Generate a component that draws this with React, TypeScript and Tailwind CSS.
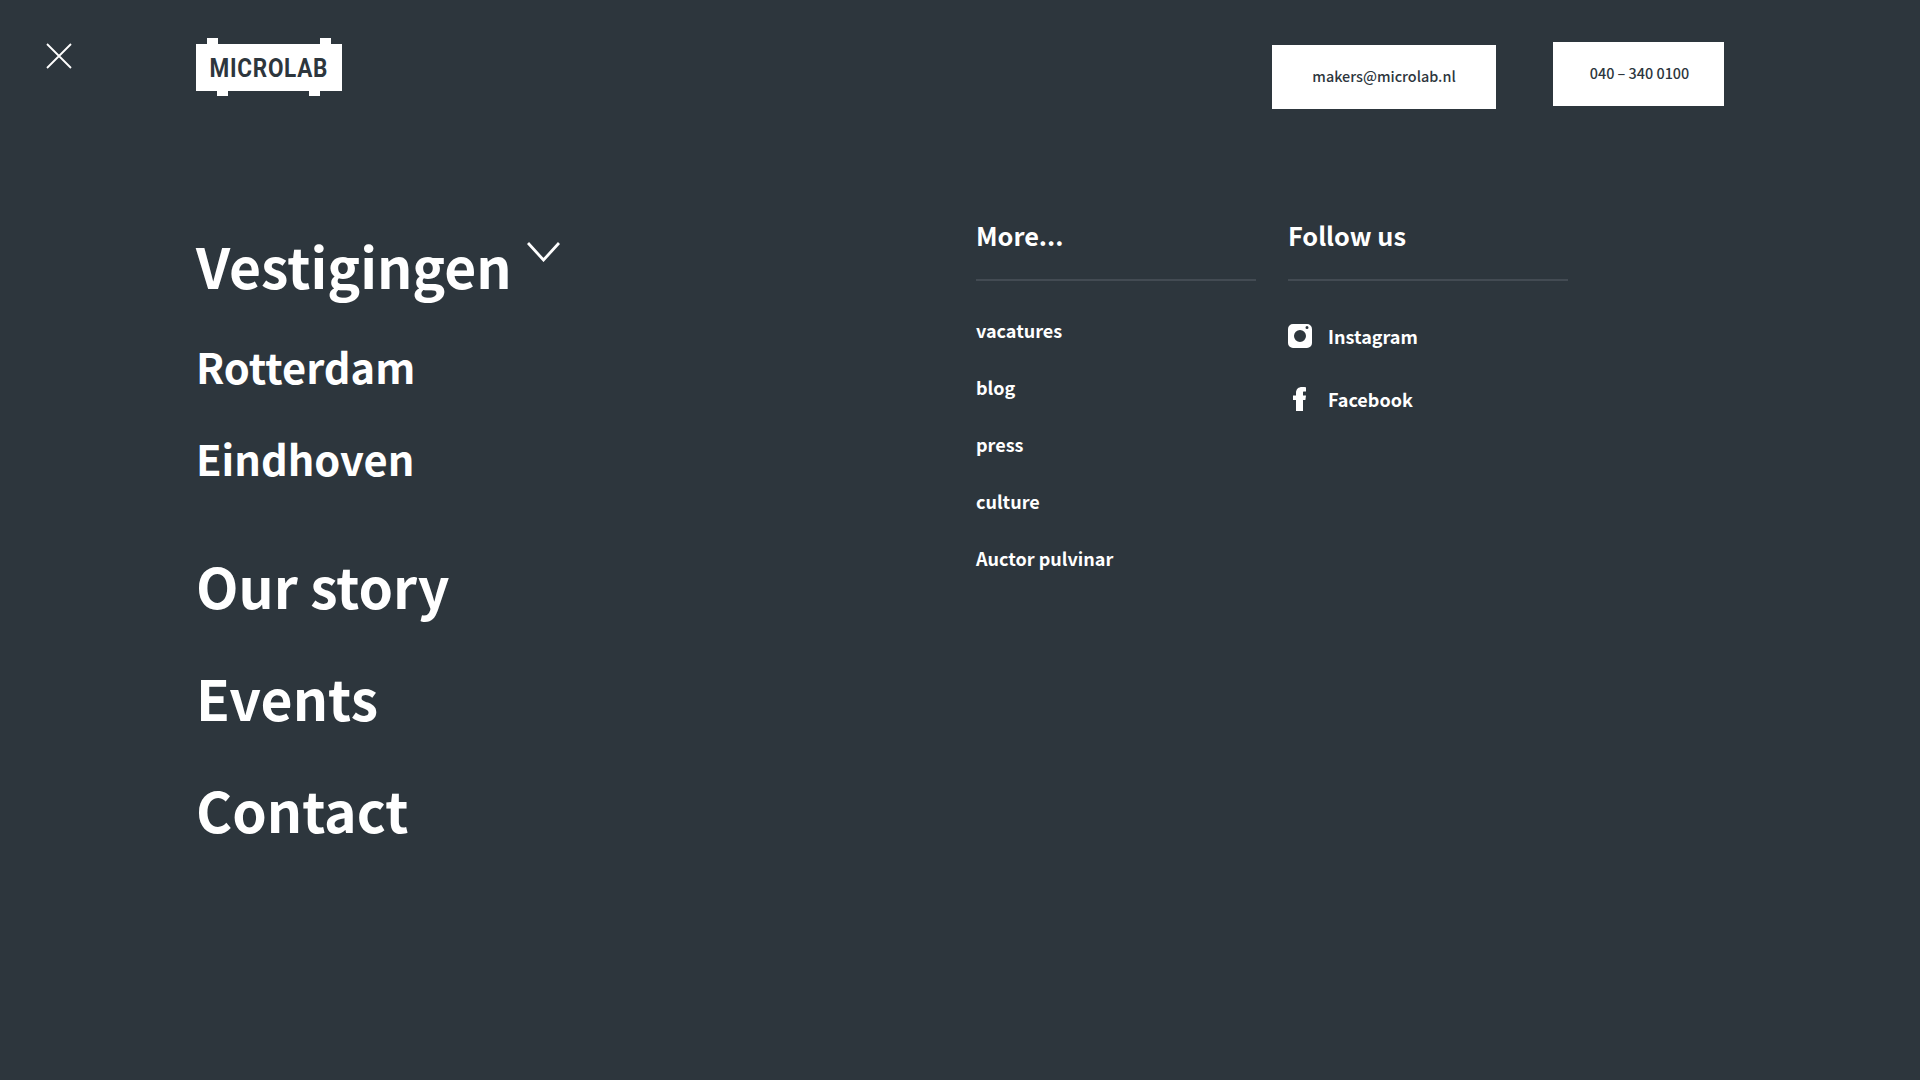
const font = "font-['Noto_Sans_CJK_SC','Noto_Sans',sans-serif]";

function Close() {
  return (
    <svg width="26" height="26" viewBox="0 0 26 26" fill="none" stroke="#fff" strokeWidth="1.8">
      <path d="M1 1 L25 25 M25 1 L1 25" />
    </svg>
  );
}

function Logo() {
  return (
    <div className="relative mt-[38px] h-[58px] w-[146px]">
      <div className="absolute left-[11px] top-0 h-[7px] w-[11px] bg-white" />
      <div className="absolute left-[124px] top-0 h-[7px] w-[11px] bg-white" />
      <div className="absolute left-[21px] bottom-0 h-[7px] w-[11px] bg-white" />
      <div className="absolute left-[113px] bottom-0 h-[7px] w-[11px] bg-white" />
      <div className="absolute inset-x-0 top-[6px] bottom-[5px] flex items-center justify-center bg-white pt-[1px] text-[#2d363d]">
        <span className="block scale-x-90 font-['Roboto',sans-serif] text-[25px] font-bold leading-none tracking-[0.8px]">MICROLAB</span>
      </div>
    </div>
  );
}

function Chevron() {
  return (
    <svg width="33" height="21" viewBox="0 0 33 21" fill="none" stroke="#fff" strokeWidth="2.8">
      <path d="M1 2 L16.500 19 L32 2" />
    </svg>
  );
}

function Instagram() {
  return (
    <svg width="24" height="24" viewBox="0 0 24 24">
      <path
        fillRule="evenodd"
        fill="#fff"
        d="M5 0H19A5 5 0 0 1 24 5V19A5 5 0 0 1 19 24H5A5 5 0 0 1 0 19V5A5 5 0 0 1 5 0ZM12 6A6 6 0 1 0 12 18A6 6 0 1 0 12 6ZM19 2A1.500 1.500 0 1 0 19 5A1.500 1.500 0 1 0 19 2Z"
      />
    </svg>
  );
}

function Facebook() {
  return (
    <svg width="24" height="24" viewBox="0 0 24 24">
      <path fill="#fff" d="M8 24V13H5V8.500H8V6C8 2 10.500 0 14 0C15.800 0 17.400 0.200 18 0.300V4.500H15.800C15.200 4.500 15 5 15 5.800V8.500H18L17.400 13H15V24Z" />
    </svg>
  );
}

const more = ["vacatures", "blog", "press", "culture", "Auctor pulvinar"];

export default function App() {
  return (
    <div className={`${font} flex h-screen flex-col overflow-hidden bg-[#2d363d] text-white`}>
      <header className="flex items-start">
        <div className="ml-[46px] mt-[43px] w-[150px]">
          <Close />
        </div>
        <Logo />
        <a className="ml-[930px] mt-[45px] flex h-[64px] w-[224px] items-center justify-center bg-white pb-[2px] text-[14.400px] font-medium leading-none text-[#2d363d]">
          makers@microlab.nl
        </a>
        <a className="ml-[57px] mt-[42px] flex h-[64px] w-[171px] items-center justify-center bg-white pb-[2px] pl-[2px] text-[14.400px] font-medium leading-none text-[#2d363d]">
          040 – 340 0100
        </a>
      </header>
      <main className="flex items-start pl-[196px]">
        <nav className="w-[780px] pt-[116px] font-semibold">
          <div className="flex items-start">
            <span className="text-[55.200px] leading-[80px]">Vestigingen</span>
            <span className="ml-[15px] mt-[16px]"><Chevron /></span>
          </div>
          <div className="mt-[29px] text-[41.600px] leading-[64px]">Rotterdam</div>
          <div className="mt-[28px] text-[41.600px] leading-[64px]">Eindhoven</div>
          <div className="mt-[55px] text-[55.200px] leading-[80px]">Our story</div>
          <div className="mt-[32px] text-[55.200px] leading-[80px]">Events</div>
          <div className="mt-[32px] text-[55.200px] leading-[80px]">Contact</div>
        </nav>
        <section className="mt-[108px] w-[280px]">
          <h3 className="border-b-2 border-[#434b53] pb-[26px] text-[25.300px] font-bold leading-[36px]">More...</h3>
          <ul className="mt-[37px] flex flex-col gap-[33px] text-[18px] font-bold leading-[24px]">
            {more.map((m) => <li key={m}>{m}</li>)}
          </ul>
        </section>
        <section className="ml-[32px] mt-[108px] w-[280px]">
          <h3 className="border-b-2 border-[#434b53] pb-[26px] text-[25.300px] font-bold leading-[36px]">Follow us</h3>
          <ul className="mt-[43px] flex flex-col gap-[39px] text-[18px] font-bold leading-[24px]">
            <li className="flex items-center gap-[16px]"><Instagram />Instagram</li>
            <li className="flex items-center gap-[16px]"><Facebook />Facebook</li>
          </ul>
        </section>
      </main>
    </div>
  );
}
